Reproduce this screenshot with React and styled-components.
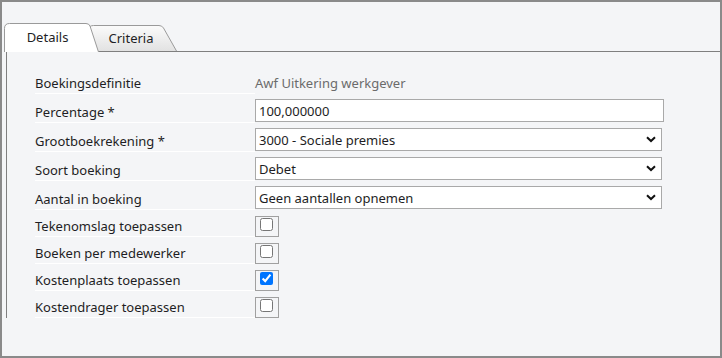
import styled, { createGlobalStyle } from "styled-components";

const GlobalStyle = createGlobalStyle`
  html, body {
    margin: 0;
    padding: 0;
    background: #f4f5f7;
  }
  body {
    font-family: "Noto Sans", "Open Sans", sans-serif;
    font-size: 13px;
    color: #1e1e24;
  }
`;

const Frame = styled.div`
  box-sizing: border-box;
  width: 722px;
  height: 358px;
  border: 2px solid #8a8a8a;
  background: #f4f5f7;
  padding: 21px 0 0 2px;
`;

const TabBar = styled.div`
  position: relative;
  z-index: 1;
  display: flex;
  align-items: flex-start;
  height: 28px;
`;

const Tab = styled.div`
  position: relative;
  z-index: ${(p) => (p.$active ? 2 : 1)};
  width: ${(p) => p.$width}px;
  height: ${(p) => (p.$active ? 29 : 26)}px;
  margin-top: ${(p) => (p.$active ? 0 : 2)}px;
  margin-left: ${(p) => p.$offset || 0}px;
  display: flex;
  align-items: center;
  justify-content: center;
  padding-right: ${(p) => p.$padRight || 0}px;
  padding-left: ${(p) => p.$padLeft || 0}px;
  box-sizing: border-box;
  color: #1e1e24;
  cursor: pointer;

  svg {
    position: absolute;
    inset: 0;
  }

  span {
    position: relative;
    padding-bottom: ${(p) => (p.$active ? 1 : 0)}px;
  }
`;

const Panel = styled.div`
  margin-left: 2px;
  border-left: 1px solid #7f7f7f;
  border-top: 1px solid #7f7f7f;
  padding: 18px 0 0 28px;
`;

const Row = styled.div`
  display: grid;
  grid-template-columns: 220px ${(p) => p.$controlWidth || 409}px;
  height: ${(p) => p.$height}px;
`;

const Label = styled.div`
  display: flex;
  align-items: flex-end;
  border-bottom: 1px solid #ffffff;
  padding-bottom: 1px;
  line-height: 18px;
  color: #1e1e24;
`;

const Value = styled.div`
  display: flex;
  align-items: flex-end;
  padding-bottom: 2px;
  line-height: 18px;
  color: #6b6b6b;
`;

const Control = styled.div`
  padding-top: ${(p) => p.$top}px;
  position: relative;
`;

const TextInput = styled.input`
  box-sizing: border-box;
  width: 409px;
  height: 23px;
  margin: 0;
  border: 1px solid #a9a9a9;
  border-radius: 0;
  background: #ffffff;
  padding: 0 3px;
  font: inherit;
  color: #1e1e24;
  outline: none;
`;

const Select = styled.select`
  box-sizing: border-box;
  width: 407px;
  height: 23px;
  margin: 0;
  border: 1px solid #a9a9a9;
  border-radius: 0;
  background: #ffffff;
  padding: 0 3px;
  font: inherit;
  color: #1e1e24;
  appearance: none;
  outline: none;
`;

const Chevron = styled.svg`
  position: absolute;
  right: 8px;
  top: ${(p) => p.$top}px;
  pointer-events: none;
`;

const CheckFrame = styled.div`
  box-sizing: border-box;
  width: 24px;
  height: 21px;
  border: 1px solid #a0a0a0;
  display: flex;
  align-items: flex-start;
  padding: 1px 0 0 4px;

  input {
    margin: 0;
    width: 13px;
    height: 13px;
  }
`;

const DropRow = ({ label, value }) => (
  <Row $height={29} $controlWidth={409}>
    <Label>{label}</Label>
    <Control $top={5}>
      <Select defaultValue={value}>
        <option>{value}</option>
      </Select>
      <Chevron $top={13} width="10" height="7" viewBox="0 0 10 7">
        <path d="M1 1.2 L5 5 L9 1.2" fill="none" stroke="#111" strokeWidth="2" />
      </Chevron>
    </Control>
  </Row>
);

const CheckRow = ({ label, checked }) => (
  <Row $height={27}>
    <Label>{label}</Label>
    <Control $top={6}>
      <CheckFrame>
        <input type="checkbox" defaultChecked={checked} />
      </CheckFrame>
    </Control>
  </Row>
);

export default function App() {
  return (
    <>
      <GlobalStyle />
      <Frame>
        <TabBar>
          <Tab $active $width={95} $padRight={8}>
            <svg width="95" height="29" viewBox="0 0 95 29">
              <path
                d="M0.5 29 L0.5 5.5 Q0.5 0.5 5.5 0.5 L82 0.5 Q85 0.5 86 3 L94.5 29"
                fill="#ffffff"
                stroke="#9a9a9a"
              />
            </svg>
            <span>Details</span>
          </Tab>
          <Tab $width={90} $offset={-12} $padRight={2}>
            <svg width="90" height="26" viewBox="0 0 90 26">
              <defs>
                <linearGradient id="tabg" x1="0" y1="0" x2="0" y2="1">
                  <stop offset="0" stopColor="#fbfbfb" />
                  <stop offset="1" stopColor="#e2e2e2" />
                </linearGradient>
              </defs>
              <path
                d="M1.5 26 L1.5 5.5 Q1.5 0.5 6.5 0.5 L72 0.5 Q75 0.5 76.5 3 L89.5 26"
                fill="url(#tabg)"
                stroke="#9a9a9a"
              />
            </svg>
            <span>Criteria</span>
          </Tab>
        </TabBar>
        <Panel>
          <Row $height={24}>
            <Label>Boekingsdefinitie</Label>
            <Value>Awf Uitkering werkgever</Value>
          </Row>
          <Row $height={29}>
            <Label>Percentage *</Label>
            <Control $top={5}>
              <TextInput defaultValue="100,000000" />
            </Control>
          </Row>
          <DropRow label="Grootboekrekening *" value="3000 - Sociale premies" />
          <DropRow label="Soort boeking" value="Debet" />
          <DropRow label="Aantal in boeking" value="Geen aantallen opnemen" />
          <CheckRow label="Tekenomslag toepassen" />
          <CheckRow label="Boeken per medewerker" />
          <CheckRow label="Kostenplaats toepassen" checked />
          <CheckRow label="Kostendrager toepassen" />
        </Panel>
      </Frame>
    </>
  );
}
